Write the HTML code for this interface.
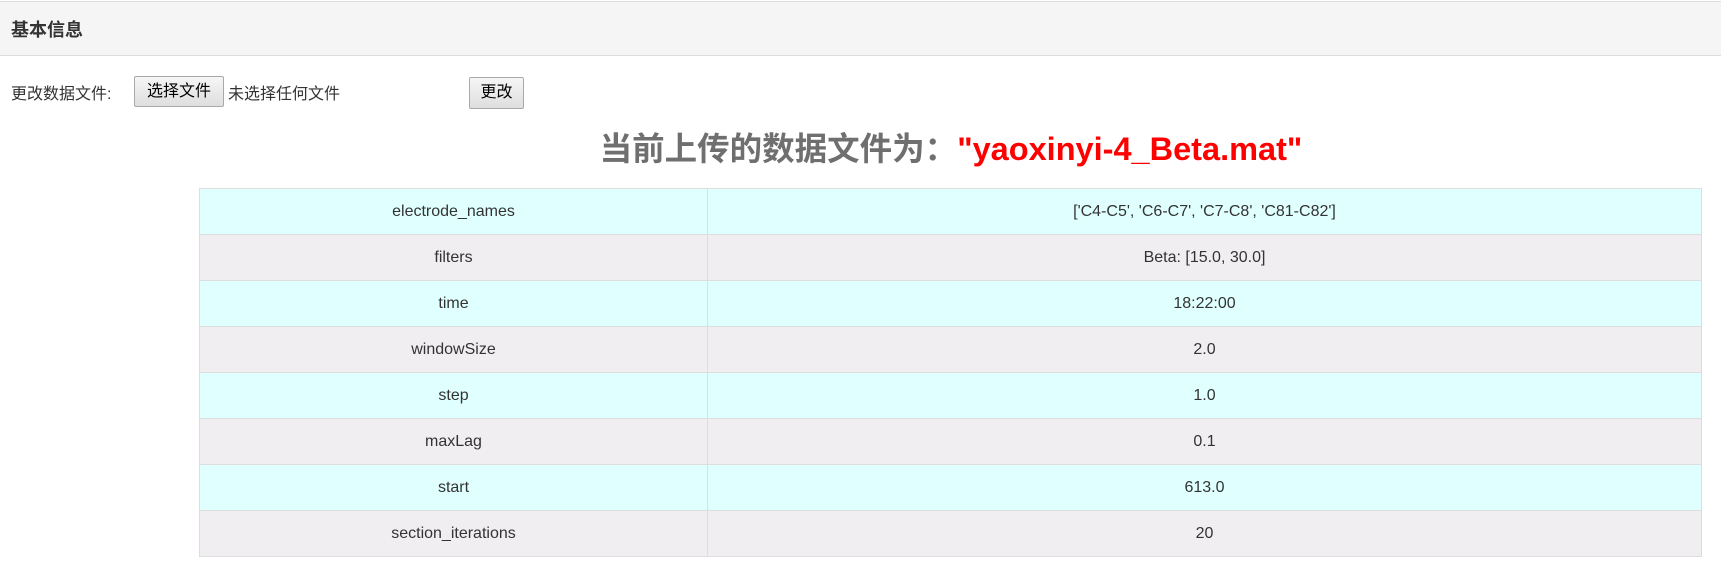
<!DOCTYPE html>
<html><head><meta charset="utf-8"><style>
*{margin:0;padding:0;box-sizing:border-box}
body{width:1721px;height:570px;background:#fff;font-family:"Liberation Sans","Noto Sans CJK SC",sans-serif;color:#333;position:relative;overflow:hidden}
.hdr{position:absolute;left:0;top:1px;width:1721px;height:55px;background:#f5f5f5;border-top:1px solid #ddd;border-bottom:1px solid #ddd}
.hdr span{position:absolute;left:11px;top:14px;font-size:18px;font-weight:bold;color:#333}
.lbl{position:absolute;top:80px;font-size:16px;color:#333}
.btn{position:absolute;background:linear-gradient(#f6f6f6,#dedede);border:1px solid #a9a9a9;border-radius:2px;font-size:16px;color:#000;text-align:center}
h1{position:absolute;left:0;width:1902px;top:123px;text-align:center;font-size:32.5px;font-weight:bold;color:#6f6f6f;white-space:nowrap}
h1 b{color:#f00}
table{position:absolute;left:199px;top:188px;width:1503px;border-collapse:collapse;font-size:16px;color:#333}
td{height:46px;border:1px solid #ddd;text-align:center}
td:first-child{width:508px}
tr:nth-child(odd){background:#e0ffff}
tr:nth-child(even){background:#f0eef1}
</style></head><body>
<div class="hdr"><span>基本信息</span></div>
<div class="lbl" style="left:11px">更改数据文件:</div>
<div class="btn" style="left:134px;top:76px;width:90px;height:31px;line-height:29px">选择文件</div>
<div class="lbl" style="left:228px">未选择任何文件</div>
<div class="btn" style="left:469px;top:77px;width:55px;height:32px;line-height:30px">更改</div>
<h1>当前上传的数据文件为：<b>"yaoxinyi-4_Beta.mat"</b></h1>
<table>
<tr><td>electrode_names</td><td>['C4-C5', 'C6-C7', 'C7-C8', 'C81-C82']</td></tr>
<tr><td>filters</td><td>Beta: [15.0, 30.0]</td></tr>
<tr><td>time</td><td>18:22:00</td></tr>
<tr><td>windowSize</td><td>2.0</td></tr>
<tr><td>step</td><td>1.0</td></tr>
<tr><td>maxLag</td><td>0.1</td></tr>
<tr><td>start</td><td>613.0</td></tr>
<tr><td>section_iterations</td><td>20</td></tr>
</table>
</body></html>
